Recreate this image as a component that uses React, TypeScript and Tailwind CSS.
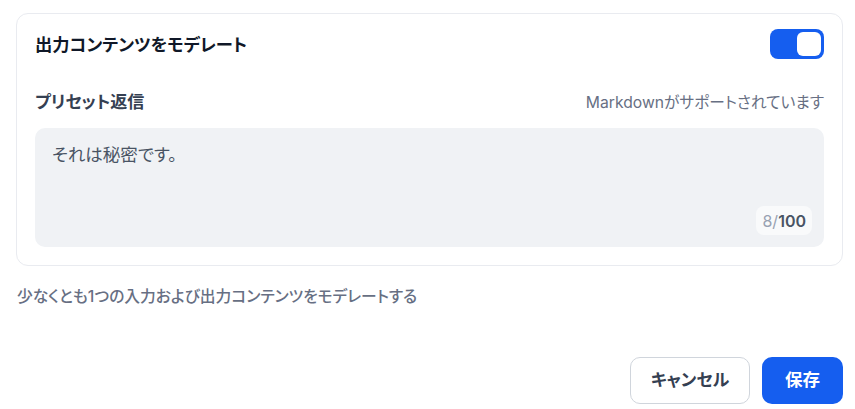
const jp = "font-['Inter','Noto_Sans_CJK_JP',sans-serif] [font-feature-settings:'palt']";

function Toggle() {
	return (
		<div className="w-[54px] h-[30px] rounded-[8px] bg-[#155eef] p-[3px] flex justify-end">
			<div className="w-[24px] h-[24px] rounded-[6px] bg-white" />
		</div>
	);
}

export default function App() {
	return (
		<div className={`${jp} w-[855px] h-[409px] bg-white pt-[13px] pl-[16px] pr-[12px]`}>
			<div className="rounded-[12px] border border-[#e9ebf0] px-[18px] pt-[15px] pb-[18px]">
				<div className="h-[30px] flex items-center justify-between">
					<h2 className="text-[17.3px] font-semibold text-[#101828] leading-[30px] pt-[2px]">
						出力コンテンツをモデレート
					</h2>
					<Toggle />
				</div>
				<div className="mt-[32px] h-[24px] flex items-center justify-between">
					<span className="text-[17px] font-semibold text-[#354052]">プリセット返信</span>
					<span className="text-[15.7px] text-[#676f83]">Markdownがサポートされています</span>
				</div>
				<div className="mt-[13px] h-[119px] rounded-[10px] bg-[#f0f2f5] pl-[17px] pr-[12px] pt-[14px] pb-[12px] flex flex-col justify-between">
					<p className="text-[17.5px] leading-[26px] text-[#495464]">それは秘密です。</p>
					<div className="self-end h-[29px] px-[6px] rounded-[8px] bg-[#f9fafb] flex items-center text-[16px]">
						<span className="text-[#98a2b2]">8/</span>
						<span className="font-semibold text-[#495464]">100</span>
					</div>
				</div>
			</div>
			<p className="mt-[21px] pl-[1px] text-[15.75px] leading-[20px] font-medium text-[#676f83]">
				少なくとも1つの入力および出力コンテンツをモデレートする
			</p>
			<div className="mt-[50px] flex justify-end gap-[12px]">
				<button className="w-[120px] h-[47px] rounded-[10px] border border-[#d0d5dc] bg-white text-[17px] font-semibold text-[#354052]">
					キャンセル
				</button>
				<button className="w-[81px] h-[47px] rounded-[10px] bg-[#155eef] text-[17.5px] font-semibold text-white">
					保存
				</button>
			</div>
		</div>
	);
}
